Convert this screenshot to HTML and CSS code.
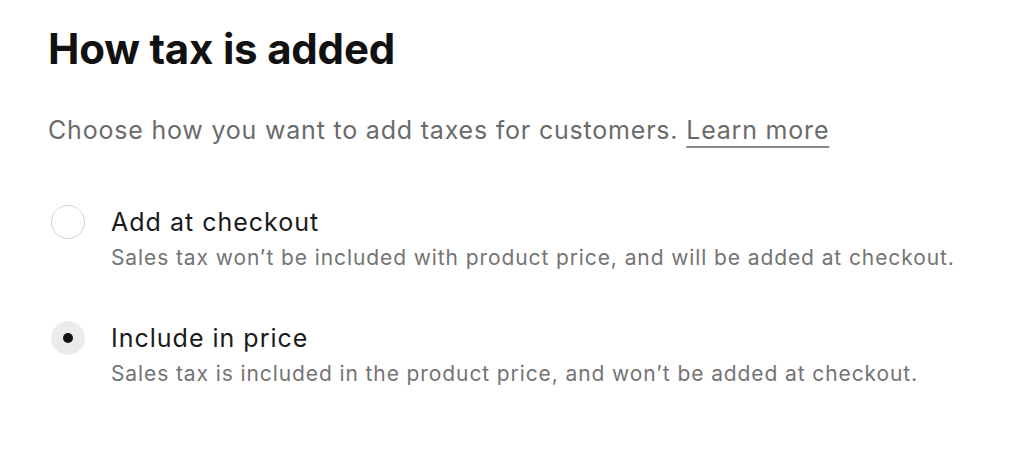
FILE: index.html
```html
<!DOCTYPE html>
<html>
    <head>
        <meta http-equiv="Content-Type" content="text/html; charset=utf8"/>
        <title>How tax is added</title>
        <link rel="stylesheet" href="styles.css">
    </head>
    <body>
        <div class="tax_panel">
            <h1 class="tax_title">How tax is added</h1>
            <p class="tax_intro">Choose how you want to add taxes for customers. <a class="learn_link" href="#">Learn more</a></p>

            <div class="option_list">
                <label class="option_row">
                    <span class="radio_box"><span class="radio_mark"></span></span>
                    <span class="option_text">
                        <span class="option_name">Add at checkout</span>
                        <span class="option_desc">Sales tax won’t be included with product price, and will be added at checkout.</span>
                    </span>
                </label>
                <label class="option_row">
                    <span class="radio_box"><span class="radio_mark radio_checked"></span></span>
                    <span class="option_text">
                        <span class="option_name">Include in price</span>
                        <span class="option_desc">Sales tax is included in the product price, and won’t be added at checkout.</span>
                    </span>
                </label>
            </div>
        </div>
    </body>
</html>
```

FILE: styles.css
```css
body {
    margin: 0;
    background: #ffffff;
    font-family: Inter, "Noto Sans", Arial, sans-serif;
}
.tax_panel {
    padding: 24px 48px;
}
.tax_title {
    margin: 0;
    font-size: 42px; font-weight: 700; line-height: 50px;
    color: #111111;
    letter-spacing: -0.2px;
}
.tax_intro {
    margin: 40px 0 0 0;
    font-size: 25px; line-height: 32px;
    color: #6b6b6b;
    letter-spacing: 0.8px;
}
.learn_link {
    color: #6b6b6b;
    text-decoration: underline;
    text-decoration-color: #8a8a8a;
    text-decoration-thickness: 2px;
    text-underline-offset: 7px;
}
.option_list {
    display: flex; flex-direction: column;
    gap: 50px;
    margin-top: 60px;
}
.option_row {
    display: flex; align-items: flex-start;
    gap: 26px;
}
.radio_box {
    height: 32px;
    display: flex; align-items: center;
    flex: none;
}
.radio_mark {
    box-sizing: border-box;
    width: 34px; height: 34px;
    margin-left: 3px;
    border: 1.5px solid #d2d2d2;
    border-radius: 50%;
    background: #ffffff;
    display: flex; align-items: center; justify-content: center;
}
.radio_checked {
    border-color: #ebebeb;
    background: #ebebeb;
}
.radio_checked::after {
    content: "";
    width: 10px; height: 10px;
    border-radius: 50%;
    background: #111111;
}
.option_text {
    display: flex; flex-direction: column;
}
.option_name {
    font-size: 25px; line-height: 32px;
    color: #1a1a1a;
    letter-spacing: 1px;
}
.option_desc {
    margin-top: 6px;
    font-size: 21px; line-height: 28px;
    color: #747474;
    letter-spacing: 0.9px;
}
```
